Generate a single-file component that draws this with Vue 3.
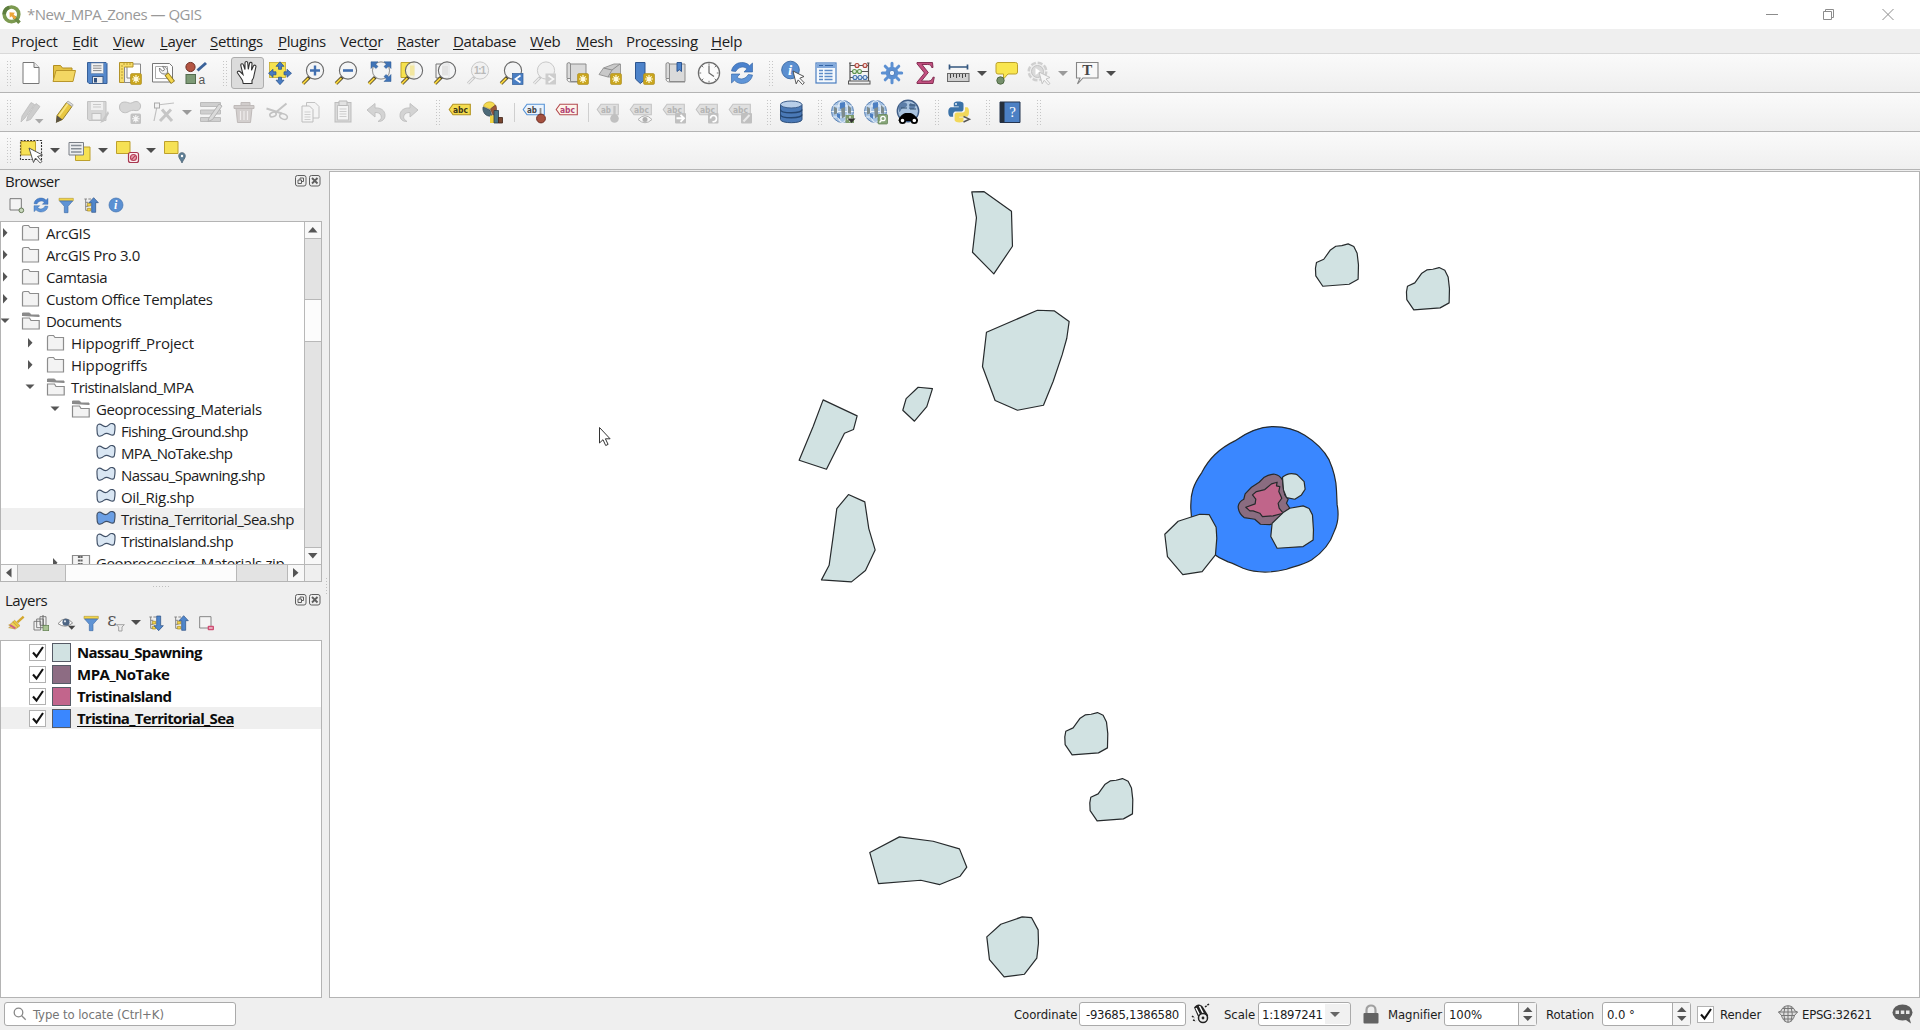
<script setup>
const menus = [
  { pre: 'Pro', key: 'j', post: 'ect', w: 61.5 },
  { pre: '', key: 'E', post: 'dit', w: 40.5 },
  { pre: '', key: 'V', post: 'iew', w: 47 },
  { pre: '', key: 'L', post: 'ayer', w: 50 },
  { pre: '', key: 'S', post: 'ettings', w: 68 },
  { pre: '', key: 'P', post: 'lugins', w: 62 },
  { pre: 'Vect', key: 'o', post: 'r', w: 57 },
  { pre: '', key: 'R', post: 'aster', w: 56 },
  { pre: '', key: 'D', post: 'atabase', w: 77 },
  { pre: '', key: 'W', post: 'eb', w: 46 },
  { pre: '', key: 'M', post: 'esh', w: 50 },
  { pre: 'Pro', key: 'c', post: 'essing', w: 85 },
  { pre: '', key: 'H', post: 'elp', w: 60 },
]

const lens = (inner = '', stroke = '#6a6a6a', handle = '#f4d13c') =>
  `<path d="M2 22.5 8.5 16" stroke="#4a4226" stroke-width="3.6"/><path d="M1.8 22.7 7.4 17.1" stroke="${handle}" stroke-width="2"/><circle cx="14" cy="9.5" r="8.6" fill="#f3f5f6" fill-opacity=".85" stroke="${stroke}" stroke-width="1.1"/>${inner}`
const fadedLens = (inner = '') =>
  `<path d="M2 22.5 8.5 16" stroke="#c3c3c3" stroke-width="3"/><path d="M2 22.5 7.4 17.1" stroke="#ededed" stroke-width="1.4"/><circle cx="14" cy="9.5" r="8.6" fill="#f1f1f1" stroke="#c9c9c9"/>${inner}`
const star = `<rect x="12.5" y="12.5" width="11" height="11" rx="1.5" fill="#c9a51d" stroke="#a98a1c" stroke-width=".6"/><path d="M18 14v8M14 18h8M15.3 15.3l5.4 5.4M20.7 15.3l-5.4 5.4" stroke="#fffbe0" stroke-width="1.2"/><circle cx="18" cy="18" r="1.8" fill="#fffbe0"/>`
const greyStar = `<rect x="12.5" y="13.5" width="10.5" height="10.5" rx="1.5" fill="#c2c2c2"/><path d="M17.8 15v7.6M14 18.8h7.6M15.2 16.2l5.2 5.2M20.4 16.2l-5.2 5.2" stroke="#f6f6f6" stroke-width="1.1"/>`
const tag = (fill, stroke, color, txt = 'abc') =>
  `<path d="M1.2 9.5 5 4.3h17.3v10.4H5z" fill="${fill}" stroke="${stroke}" stroke-width="1.1"/><text x="5" y="12.5" font-family="DejaVu Sans, sans-serif" font-size="8.4" font-weight="bold" fill="${color}" textLength="${txt.length * 5}" lengthAdjust="spacingAndGlyphs">${txt}</text>`
const greyTag = (txt = 'abc') => tag('#e0e0e0', '#c4c4c4', '#b4b4b4', txt)
const cycle = `<path d="M1.5 10C2.5 4 8 .8 13.500 1.600c2.600.4 4.700 1.500 6 3.100L22.500 2v9H14l3-3.200c-3.500-3-8.500-2-11.300 2.700z" fill="#4b82cd" stroke="#2d5f9f" stroke-width=".6"/><path d="M22.500 14C21.500 20 16 23.200 10.500 22.400c-2.600-.4-4.700-1.500-6-3.100L1.500 22v-9H10l-3 3.200c3.500 3 8.500 2 11.300-2.700z" fill="#5f95d8" stroke="#2d5f9f" stroke-width=".6"/>`
const globe = `<circle cx="12.500" cy="11.500" r="11" fill="#a6c3e3" stroke="#5b82b5" stroke-width="1"/><path d="M1.500 11.500h22M3 6h19M3 17h19" stroke="#ecf3fa" stroke-width="1.1"/><ellipse cx="12.500" cy="11.500" rx="5" ry="11" fill="none" stroke="#dfeaf6" stroke-width="1.1"/><path d="M4 6.500l3 2v5l-3 1zM18 5l3 3v6l-3-1zM11 7.500l4-2v11l-3 2z" fill="#7d8b8c"/><path d="M10 3l5-1v5l-5 2zM7 13l3 1v5l-3-2z" fill="#4c7fc2"/>`
const book = `<path d="M2 3c0-1.800 3.500-1.800 3.500 0v14.500H2zM5.500 3H21v17.500H5.500z" fill="#dadada" stroke="#8b8b8b"/><path d="M2 18c0 3 3.500 3 3.500 3H21" fill="none" stroke="#8b8b8b"/>`

const I = {
  new: `<path d="M4 1.500h11l5 5V22.500H4z" fill="#fff" stroke="#777"/><path d="M15 1.500v5h5" fill="#e8e8e8" stroke="#777"/>`,
  open: `<path d="M1.500 20.500V4.500h7l2 2.500H20v3" fill="#e5c345" stroke="#b38f20"/><path d="M1 20.500 4 9.500h19.500l-2.500 11z" fill="#f3d763" stroke="#b9962a"/>`,
  save: `<path d="M2.500 1.500h18.500l1 1v20H4l-1.500-1.500z" fill="#5588cb" stroke="#365f98"/><rect x="6" y="2" width="12.500" height="10.500" fill="#f2f2f2" stroke="#7188a8" stroke-width=".6"/><path d="M8 4.800h8.500M8 7.200h8.500M8 9.600h8.500" stroke="#888" stroke-width="1"/><rect x="7.500" y="15.500" width="10.500" height="7" fill="#e9e9e9" stroke="#3c5d8c"/><rect x="9" y="17" width="3" height="4.500" fill="#33527f"/>`,
  layoutNew: `<path d="M9 3h13.500v14H9z" fill="#fff" stroke="#888"/><path d="M1.500 1.500H15V6H6.500v15.500h-5z" fill="#f6dc68" stroke="#b39328"/><path d="M6.500 6v15.500H14" fill="none" stroke="#8a8a8a"/><path d="M3 5h2M3 8h2M3 11h2M3 14h2M3 17h2M6 2v2M9 2v2M12 2v2" stroke="#ad8f2f" stroke-width=".8"/>${star}`,
  layoutMgr: `<path d="M1.500 2.500h17l3 3v15.500h-20z" fill="#fdfdfd" stroke="#777"/><path d="M4.500 5.500h12v12h-12z" fill="#fff" stroke="#aaa"/><path d="M15.500 13l6.500 8.500" stroke="#8b741a" stroke-width="5"/><path d="M16 13.500l5.600 7.500" stroke="#f4d64e" stroke-width="3.200"/><path d="M8.500 7c-.5 3.500 1.500 6.500 6.200 6l2-1.800c0-4-2.500-6-5.200-5.800l2.200 3.200-2.200 1.500z" fill="#f3f3f3" stroke="#777"/>`,
  style: `<circle cx="6.500" cy="6" r="4.600" fill="#b45543" stroke="#713026"/><path d="M22 2 13.500 9.500" stroke="#3a6299" stroke-width="3"/><rect x="2" y="13.500" width="9.500" height="9" fill="#7d9a76" stroke="#536b4e"/><text x="14.500" y="22.500" font-family="Liberation Sans, sans-serif" font-size="12" fill="#555">a</text>`,
  hand: `<path d="M6.500 19.500C4.500 16 2.500 13.500 1.500 12c-.8-1.800 1.500-2.600 3-1L7 13.500 4.800 4.500c-.3-2 2.200-2.300 2.700-.5L9 8.500V1.800c.2-1.800 2.600-1.700 2.700 0l.6 6.500 1.200-6c.6-1.600 2.800-1 2.500.6l-.5 6.400 2-4.500c1-1.400 2.800-.5 2.400 1l-1.700 7.700c-.3 3-.8 4.500-2.200 6V22.500H7.200z" transform="translate(1 0)" fill="#fff" stroke="#333" stroke-width="1.100"/>`,
  panSel: `<rect x="1.500" y="1.500" width="16" height="15" fill="#f6e24e" stroke="#c4a92c" stroke-width=".8"/><g fill="#477cc4" stroke="#264f88" stroke-width=".7"><path d="M12 .8l4 4.500h-2.500v3h-3v-3H8z"/><path d="M12 23.700l4-4.500h-2.500v-3h-3v3H8z"/><path d="M.5 12.300 5 8.300v2.500h3v3H5v2.500z"/><path d="M23.500 12.300 19 8.300v2.500h-3v3h3v2.500z"/></g>`,
  zoomIn: lens(`<path d="M14 4.500v10M9 9.500h10" stroke="#416fb0" stroke-width="2.400"/>`),
  zoomOut: lens(`<path d="M9 9.500h10" stroke="#416fb0" stroke-width="2.600"/>`),
  zoomFull: lens(`<g fill="#3f74b8" stroke="#2b568f" stroke-width=".5"><path d="M4 .8h7L8.500 3 11 5.500 8.800 7.500 6.300 5 4 7.500zM24 .8h-7L19.500 3 17 5.500l2.200 2L21.700 5 24 7.500zM24 20.500h-7l2.500-2.500L17 15.500l2.200-2 2.500 2.500L24 13.500z"/></g>`, '#999'),
  zoomSel: `<path d="M1 1.500h13v15H1z" fill="#f6e24e" stroke="#bfa52c"/>` + lens(`<path d="M10 4.500h4.500v10H10z" fill="#f3e7a0"/>`),
  zoomLayer: `<path d="M3 3h13v14H3z" fill="#f3f3f3" stroke="#777"/>` + lens(`<path d="M9 4.500h6v10H9z" fill="#e2e2e2"/>`),
  zoom11: fadedLens(`<text x="8" y="13" font-family="Liberation Sans, sans-serif" font-weight="bold" font-size="10" fill="#b9b9b9" textLength="12">1:1</text>`),
  zoomLast: lens(`<rect x="13.500" y="12.500" width="10.500" height="11" fill="#4a7fc4" stroke="#2f5d99" stroke-width=".7"/><path d="M21.500 14.500 16.500 18l5 3.500" fill="none" stroke="#fff" stroke-width="1.700"/>`),
  zoomNext: fadedLens(`<rect x="13.500" y="12.500" width="10.500" height="11" fill="#cdcdcd"/><path d="M16.500 14.500 21.500 18l-5 3.500" fill="none" stroke="#f7f7f7" stroke-width="1.600"/>`),
  newMap: book + star,
  new3d: `<path d="M1 13.500 5.500 7 16 3h6.500V16H10z" fill="#c9c9c9" stroke="#999"/><path d="M5.500 7 14 9l8-6M14 9l-4 7" stroke="#8d8d8d" fill="none"/>` + star,
  newBm: `<path d="M4.500 1.500h9.500v17l-4.700 4L4.500 18z" fill="#4d83ca" stroke="#2c5590"/>` + star,
  bm: book + `<path d="M13 1.500h4.500v9l-2.200-1.800L13 10.500z" fill="#4d83ca" stroke="#2c5590"/>`,
  clock: `<circle cx="12" cy="12" r="10.600" fill="#fbfbfb" stroke="#6c6c6c" stroke-width="1.200"/><path d="M12 4.500V12l5 3.500" fill="none" stroke="#666" stroke-width="1.200"/><path d="M12 2.200v2M12 19.800v2M2.200 12h2M19.800 12h2M5 5l1.300 1.300M19 5l-1.300 1.300M5 19l1.300-1.300M19 19l-1.300-1.300" stroke="#777"/>`,
  refresh: cycle,
  identify: `<circle cx="9.500" cy="9" r="8.800" fill="#5b8fd0" stroke="#416fa9"/><text x="7" y="14.300" font-family="Liberation Serif, serif" font-style="italic" font-weight="bold" font-size="15" fill="#fff">i</text><path d="M12 10l11 5.500-4.200 1.700 4.500 4.700-1.800 1.600-4.300-4.600-2 4z" fill="#fff" stroke="#444" stroke-width=".9"/>`,
  table: `<rect x="2" y="2" width="20" height="20" fill="#f5f9fd" stroke="#4a7dc0" stroke-width="1.200"/><rect x="2.500" y="2.500" width="19" height="4.500" fill="#82a9dc"/><path d="M5 9.500h4M10.500 9.500h8M5 12.500h4M10.500 12.500h8M5 15.500h4M10.500 15.500h8M5 18.500h4M10.500 18.500h8" stroke="#5d8bc7" stroke-width="1.300"/><path d="M5 4.500h4M11 4.500h8" stroke="#3465a4" stroke-width="1.200"/>`,
  abacus: `<path d="M3 1.500v20M21.500 1.500v20M3 4.500h18.500M3 10.500h18.500M3 16.500h18.500M2 2h2.500M20 2h2.500" stroke="#555" stroke-width="1.200"/><rect x="1.500" y="20" width="21.500" height="3" fill="#ededed" stroke="#555"/><g fill="#f4dcda" stroke="#b04236" stroke-width="1.100"><circle cx="10" cy="4.500" r="2"/><circle cx="18" cy="4.500" r="2"/></g><g fill="#deeed8" stroke="#5f9450" stroke-width="1.100"><circle cx="7.500" cy="10.500" r="2"/><circle cx="12.500" cy="10.500" r="2"/></g><g fill="#d8e6f4" stroke="#4273b2" stroke-width="1.100"><circle cx="8" cy="16.500" r="2"/><circle cx="13" cy="16.500" r="2"/><circle cx="18" cy="16.500" r="2"/></g>`,
  gear: `<g stroke="#5c90d2" stroke-width="3" stroke-linecap="round"><path d="M12 2.300v19.400M2.300 12h19.400M5.200 5.200l13.600 13.600M18.800 5.200 5.200 18.800"/></g><circle cx="12" cy="12" r="6.300" fill="#5c90d2"/><circle cx="12" cy="12" r="2.700" fill="#eaf2fb" stroke="#3c6db0" stroke-width=".8"/>`,
  sigma: `<path d="M4 1.500h15.500l.5 5h-1.300c-.6-2.500-1.700-3-4-3H9l6.300 8L8.500 20h7c2.500 0 3.500-1.200 4.500-3.800h1.300l-1.300 6.300H4v-1.300L11.500 12 4 2.800z" fill="#c25080" stroke="#7c2549" stroke-width=".9"/>`,
  ruler: `<path d="M3.500 6h18M3.500 3.500v5M21.500 3.500v5" stroke="#34577f" stroke-width="1.700"/><rect x="1.500" y="12.500" width="21.500" height="8" fill="#cfcfcf" stroke="#686868"/><path d="M4.500 13v4M7.500 13v3M10.500 13v4M13.500 13v3M16.500 13v4M19.500 13v3" stroke="#444" stroke-width="1"/>`,
  tip: `<path d="M4 1.500h17.500q2 0 2 2v7.500q0 2-2 2H14L9.500 18V13H4q-2 0-2-2V3.500q0-2 2-2z" fill="#f9e64f" stroke="#bba12c"/><circle cx="6.500" cy="19.500" r="3.700" fill="#76906c" stroke="#4f6944"/>`,
  action: `<circle cx="10.500" cy="10.500" r="8.800" fill="#eee" stroke="#cfcfcf" stroke-width="2.400" stroke-dasharray="5 1.900"/><circle cx="10.500" cy="10.500" r="6" fill="#dadada" stroke="#c3c3c3"/><path d="M8.500 7v7l5-3.500z" fill="#fff"/><path d="M12 11l11 5.500-4 1.500 4 4.500-1.800 1.300-4-4.500-2 3.500z" fill="#f6f6f6" stroke="#c0c0c0" stroke-width=".9"/>`,
  text: `<path d="M1.500 1.500h21.500V17H8l-5.500 6L5 17H1.500z" fill="#f8f8f8" stroke="#858585" stroke-width="1.100"/><text x="12.300" y="14" text-anchor="middle" font-family="Liberation Serif, serif" font-weight="bold" font-size="15" fill="#474747">T</text>`,

  pencils: `<path d="M2 22l1-6L12 2.500l3.500 2L6 18zM7.500 21l1.500-5.500L17 3.500l4 3L11.500 19.500z" fill="#cdcdcd" stroke="#bdbdbd" stroke-width=".8"/><path d="M16 19h8.500l-4.200 4.500z" fill="#a9a9a9"/>`,
  pencil: `<path d="M5 15.500 14.500 2.500l5.500 4L10.500 19.500 4.500 22z" fill="#e8c742" stroke="#8f7622" stroke-width=".9"/><path d="M7 16 16 3.500" stroke="#f8e581" stroke-width="1.800"/><path d="M14.500 2.500 16 1l5.200 3.800L20 6.500z" fill="#ddd" stroke="#999" stroke-width=".7"/><path d="M5 15.500l5.500 4L3.800 23z" fill="#5a5344"/>`,
  saveG: `<path d="M2.500 1.500H21v19H4l-1.500-1.500z" fill="#d6d6d6" stroke="#c2c2c2"/><rect x="6" y="2" width="12" height="8" fill="#f0f0f0"/><path d="M8 4.500h8M8 7h8" stroke="#c9c9c9"/><rect x="7" y="13.500" width="9" height="6.500" fill="#efefef" stroke="#c2c2c2"/><path d="M23 11l-6 9-2 3 4-1.500 5-8z" fill="#c6c6c6"/>`,
  polyG: `<path d="M1.500 7C1.500 1 8 1.500 11 3c2.500 1 4-1.500 7-1.500s5 2.500 4.500 5.500-3 4-5.500 3.500-4.500 0-7 1.500-8.500 1-8.500-5z" fill="#d6d6d6" stroke="#c0c0c0"/>` + greyStar,
  vertexG: `<path d="M3 21 6 6.500M6 5l17-2" stroke="#c0c0c0" stroke-width="1.200"/><rect x="3.500" y="3" width="5" height="5" fill="#f3f3f3" stroke="#aaa"/><path d="M9 21 20 9.500M11 9.500l10 11.500" stroke="#c6c6c6" stroke-width="3"/>`,
  attrG: `<path d="M1.500 2.500h20v4h-20zM1.500 10h20v4h-20zM1.500 17.500h20v4h-20z" fill="#cfcfcf" stroke="#bcbcbc"/><path d="M10 18 20 4l3 2-9.500 13.500-4.500 2z" fill="#dadada" stroke="#b3b3b3"/>`,
  trashG: `<path d="M4 8.500h16l-1.500 14h-13z" fill="#d3cfce" stroke="#bfbab9"/><path d="M2 5.500h20v3H2zM9 5V2.500h9V5" fill="#d1cdcc" stroke="#bfbab9"/><path d="M8.500 11v9M12 11v9M15.500 11v9" stroke="#efecec" stroke-width="1.200"/>`,
  cutG: `<path d="M1.500 8.500 17 13.500M21.500 3.500 10 13" stroke="#c4c4c4" stroke-width="2"/><ellipse cx="18.500" cy="16.500" rx="4" ry="2.600" fill="none" stroke="#c2c2c2" stroke-width="1.500" transform="rotate(25 18.500 16.500)"/><ellipse cx="8" cy="14.500" rx="3.300" ry="2.200" fill="none" stroke="#c2c2c2" stroke-width="1.500" transform="rotate(-20 8 14.500)"/>`,
  copyG: `<path d="M8.500 2.500h8.500l4 4V18H8.500z" fill="#f4f4f4" stroke="#c2c2c2"/><path d="M4 6h7.500l3.500 3.500V22H4z" fill="#f4f4f4" stroke="#bdbdbd"/><path d="M6.500 12h6M6.500 14.500h6M6.500 17h6M6.500 19.500h6" stroke="#cfcfcf"/>`,
  pasteG: `<rect x="4" y="2.500" width="16" height="19.500" fill="#d9d9d9" stroke="#bdbdbd"/><rect x="6.500" y="5.500" width="11" height="14.500" fill="#f4f4f4" stroke="#c4c4c4"/><path d="M8 1h8v4.500H8z" fill="#e2e2e2" stroke="#b9b9b9"/><path d="M8.500 9h7M8.500 11.500h7M8.500 14h7M8.500 16.500h7" stroke="#cdcdcd"/>`,
  undoG: `<path d="M3 10 11 3.500V8c6-.5 10 2.500 10 7.500 0 4-3 6-7 6 3-2 4-3.500 3-6s-3-3-6-3V17z" fill="#d3d3d3" stroke="#c2c2c2"/>`,
  redoG: `<path d="M21 10 13 3.500V8C7 7.500 3 10.500 3 15.500c0 4 3 6 7 6-3-2-4-3.500-3-6s3-3 6-3V17z" fill="#d3d3d3" stroke="#c2c2c2"/>`,
  abcY: tag('#f5dc4f', '#b39422', '#3c3618'),
  diagram: `<path d="M2.500 6.500C3 1 13 0 14 5.500L9 9z" fill="#f3d94f" stroke="#b3952b" stroke-width=".6"/><path d="M2 7l7 3 2 6C5 17.500 1 12 2 7z" fill="#4d6a79" stroke="#2b3d47" stroke-width=".6"/><path d="M9.500 9 14.500 5c2 3 1 8-2.500 10.500z" fill="#9a5738" stroke="#5f3120" stroke-width=".6"/><path d="M9 15.500h4V23H9z" fill="#f0d23e"/><path d="M13 10.500h4.500V23H13z" fill="#4b7583" stroke="#2b3d47" stroke-width=".8"/><path d="M17.500 17.500h4V23h-4z" fill="#7a4630" stroke="#3d2216" stroke-width=".8"/>`,
  abRed: tag('#eaf3fd', '#5692d6', '#444', 'ab') + `<path d="M18.500 8v8" stroke="#8f8f8f" stroke-width="1.800"/><circle cx="19" cy="18.500" r="4.400" fill="#a5503f" stroke="#6f2c22"/>`,
  abcR: tag('#fdf4e9', '#b44a50', '#b24173'),
  lab1: greyTag('ab') + `<path d="M18.500 6v10" stroke="#c3c3c3" stroke-width="2.400"/><circle cx="18.500" cy="18.500" r="4.300" fill="#c0c0c0"/>`,
  lab2: greyTag() + `<path d="M9 19.500q7-7.500 14 0-7 6.500-14 0z" fill="#f6f6f6" stroke="#b3b3b3"/><circle cx="16" cy="19.500" r="2.500" fill="#b0b0b0"/>`,
  lab3: greyTag() + `<rect x="13" y="13" width="11" height="10.500" rx="1" fill="#c0c0c0"/><path d="M14.500 18.300h7M18.500 14.800l3.500 3.500-3.500 3.500" stroke="#fff" stroke-width="1.900" fill="none"/>`,
  lab4: greyTag() + `<rect x="13" y="13" width="10.500" height="10.500" rx="1" fill="#c0c0c0"/><path d="M15.500 18.500c0-4 6-4 6 0s-3 3-4 3.500" stroke="#fff" stroke-width="1.600" fill="none"/>`,
  lab5: greyTag() + `<rect x="13" y="13" width="11" height="10.500" rx="1" fill="#c0c0c0"/><path d="M15.500 21.500l6-6.500" stroke="#e9e9e9" stroke-width="2"/>`,
  db: `<path d="M1.500 4.500v15c0 4.300 21.500 4.300 21.500 0v-15" fill="#4a79b6" stroke="#2e4f7a"/><path d="M1.500 9.500c0 4.300 21.500 4.300 21.500 0M1.500 14.500c0 4.300 21.500 4.300 21.500 0" fill="none" stroke="#24456f" stroke-width="1.300"/><ellipse cx="12.200" cy="4.500" rx="10.700" ry="3.500" fill="#b9cfe9" stroke="#3d5e8b"/>`,
  globe1: globe + `<rect x="15.500" y="15" width="8.500" height="8" fill="#7c9a6a"/><path d="M17 19h6M20 16v6" stroke="#fff" stroke-width="1.200"/><path d="M17.500 18.500h8l-4 4.500z" fill="#333"/>`,
  globe2: globe + `<rect x="15" y="14.500" width="9.500" height="9.500" rx="1" fill="#86a578" stroke="#5c7c4e" stroke-width=".7"/><circle cx="20" cy="18.500" r="2.200" fill="none" stroke="#fff" stroke-width="1.300"/><path d="M18.300 20.500 16.500 22.500" stroke="#fff" stroke-width="1.300"/>`,
  globe3: `<circle cx="12" cy="11" r="10.700" fill="#a9c3de" stroke="#3f5d86" stroke-width="1.400"/><path d="M3 5c3-4 7-3 8-1s-2 4-4 4-2 4-4 4zM14 3l6 2-2 4h-5z" fill="#5c7ea8"/><path d="M13 5h6M5 8h6M14 9h6" stroke="#33506f"/><path d="M2.500 21c0-4 5-8 7-8h5c2 0 7 4 7.500 8z" fill="#000"/><circle cx="6.500" cy="20.500" r="2.700" fill="#fff" stroke="#000" stroke-width="1.800"/><circle cx="18.300" cy="20.500" r="2.700" fill="#fff" stroke="#000" stroke-width="1.800"/>`,
  python: `<path d="M11.500 1.500c-5 0-4.700 2.200-4.700 2.200V6.500h5v.8H4.500S1.300 7 1.300 12s2.800 4.800 2.800 4.800h2v-2.500s-.1-2.800 2.800-2.800h5s2.600 0 2.600-2.600V4.200s.4-2.700-5-2.700z" fill="#3b72a8"/><circle cx="9" cy="4" r=".9" fill="#fff"/><path d="M12.500 22.500c5 0 4.700-2.200 4.700-2.200v-2.800h-5v-.8h7.300s2.500.3 2.500-4.700-2-4.800-2-4.800h-2v2.500s.1 2.800-2.800 2.800h-5s-2.600 0-2.600 2.600v4.700s-.4 2.700 4.900 2.700z" fill="#f2d85a"/><path d="M16.500 16.500l6 2.700-6 2.800" fill="#f8f8f8" stroke="#555" stroke-width="1.400"/>`,
  help: `<path d="M2 2h20v20.500H2z" fill="#4c80c4" stroke="#24344f"/><path d="M2 2h4.500v20.500H2z" fill="#252f3c"/><text x="14.500" y="17" text-anchor="middle" font-family="Liberation Serif, serif" font-size="15" fill="#fff">?</text>`,

  select: `<rect x="1.500" y="1.500" width="21" height="19" fill="none" stroke="#333" stroke-width="1.100" stroke-dasharray="2 1.200"/><path d="M2 2.500h14.500v13.500H2z" fill="#f6e154" stroke="#bda02c"/><path d="M10 9l13.500 7-5 1.500 4.500 5-1.800 1.500-4.700-5-2 4.500z" fill="#fff" stroke="#555"/>`,
  form: `<path d="M8.500 8h14.500v13.500H8.500z" fill="#f6e154" stroke="#bda02c"/><path d="M2 3.500h14.500v12.500H2z" fill="#eceef0" stroke="#7a7f86"/><path d="M4 6.500h10.500M4 9.800h10.500M4 13h10.500" stroke="#868d95" stroke-width="1.400"/>`,
  desel: `<path d="M1.500 2.500h13.500v12H1.500z" fill="#f6e154" stroke="#bda02c"/><rect x="13.500" y="13.500" width="10" height="10" rx="2" fill="#fbeef0" stroke="#a83850" stroke-width="1.200"/><circle cx="18.500" cy="18.500" r="3" fill="#e9a3b0" stroke="#b8405a" stroke-width="1.200"/><path d="M16.500 20.700l4-4.400" stroke="#b8405a" stroke-width="1.200"/>`,
  selLoc: `<path d="M1.500 2.500h13.500v12H1.500z" fill="#f6e154" stroke="#bda02c"/><path d="M19 24c-1-3-3.300-4.500-3.300-7 0-4.500 6.600-4.500 6.600 0 0 2.500-2.300 4-3.300 7z" fill="#5f7f96" stroke="#42596a" stroke-width=".7"/><circle cx="19" cy="17" r="1.200" fill="#fff"/>`,

  addLayer: `<path d="M3 2.500h17v17H3z" fill="#f4f4f4" stroke="#666" stroke-width="1.300"/><circle cx="20" cy="20" r="3.500" fill="#c9d8bd" stroke="#667a58" stroke-width="1.500"/>`,
  funnel: `<path d="M1.500 2h21.500v3.500h-21.500z" fill="#f2d648" stroke="#a98c22" stroke-width=".8"/><path d="M2.500 6H22l-7 8v9.500H9.500V14z" fill="#5f93d4" stroke="#3f6da8"/>`,
  collapse: `<path d="M2 3h4M4 3v17M4 8h4M4 14h4M4 20h4M8 3h4" stroke="#808080" stroke-width="1.400"/><path d="M6.500 9.500h5v4h-5zM6.500 17h5v4h-5z" fill="#f1d349" stroke="#a68a25"/><path d="M16 1l7 7.500h-4V23h-6V8.500H9z" fill="#4f86cb" stroke="#274c80"/>`,
  expand: `<path d="M2 3h4M4 3v17M4 8h4M4 14h4M4 20h4M8 3h4" stroke="#808080" stroke-width="1.400"/><path d="M6.500 9.500h5v4h-5zM6.500 17h5v4h-5z" fill="#f1d349" stroke="#a68a25"/><path d="M16 23.500 9 16h4V1.500h6V16h4z" fill="#4f86cb" stroke="#274c80"/>`,
  info: `<circle cx="12" cy="12" r="10.500" fill="#5b90d2" stroke="#3e6fae"/><text x="9" y="18" font-family="Liberation Serif, serif" font-style="italic" font-weight="bold" font-size="18" fill="#fff">i</text>`,
  brush: `<path d="M23.500 2.500 14 11" stroke="#d4a72d" stroke-width="3.600"/><path d="M10 8l8 8-3 2.500-8-8z" fill="#ecc63c" stroke="#a98a2c" stroke-width=".8"/><path d="M7 10.500l8 8L11 21 1 19l3-2-3-2 3-1.500z" fill="#f0d25a" stroke="#b28c2f" stroke-width=".8"/><path d="M3 15l8 5" stroke="#cb5f86" stroke-width="3"/>`,
  group: `<path d="M1.500 9.500h10v13h-10zM5.500 6h10v13h-10zM10.500 2.500h9v13h-9z" fill="#f2f2f2" stroke="#6e6e6e" stroke-width="1.300"/><path d="M15 0v16" stroke="#666" stroke-width="1.500"/><rect x="15" y="15.500" width="8.500" height="8" fill="#a9c394" stroke="#5c7b4b"/>`,
  eye: `<path d="M0 13Q11-1 22 12 11 21 0 13z" fill="#fbfbfb" stroke="#8c8c8c" stroke-width="1.500"/><circle cx="12" cy="11" r="5.300" fill="#4d6583"/><circle cx="10.500" cy="9.500" r="1.700" fill="#dfe6ee"/><path d="M15 16h11l-5.500 6z" fill="#444"/>`,
  eps: `<text x="-1" y="16" font-family="DejaVu Serif, serif" font-size="27" fill="#555">ε</text><path d="M12.500 14.500h12l-3.500 3.500v6h-5v-6z" fill="#ececec" stroke="#909090" stroke-width="1.200"/>`,
  remove: `<path d="M2.500 2.500h17v17h-17z" fill="#f4f4f4" stroke="#777" stroke-width="1.300"/><rect x="14.500" y="16" width="9.500" height="7" rx="1.500" fill="#cf4f74"/><path d="M16.500 19.500h5.500" stroke="#fff" stroke-width="1.500"/>`,
}

const rows = [
  ['|', 'new', 'open', 'save', 'layoutNew', 'layoutMgr', 'style', '|', 'hand', 'panSel', 'zoomIn', 'zoomOut', 'zoomFull', 'zoomSel', 'zoomLayer', 'zoom11', 'zoomLast', 'zoomNext', 'newMap', 'new3d', 'newBm', 'bm', 'clock', 'refresh', '|', 'identify', 'table', 'abacus', 'gear', 'sigma', 'ruler', 'v', 'tip', 'action', 'w', 'text', 'v'],
  ['|', 'pencils', 'pencil', 'saveG', 'polyG', 'vertexG', 'x', 'attrG', 'trashG', 'cutG', 'copyG', 'pasteG', 'undoG', 'redoG', '|', 'abcY', 'diagram', '/', 'abRed', 'abcR', '/', 'lab1', 'lab2', 'lab3', 'lab4', 'lab5', '|', 'db', '|', 'globe1', 'globe2', 'globe3', '|', 'python', '|', 'help', '|'],
  ['|', 'select', 'v', 'form', 'v', 'desel', 'v', 'selLoc'],
]
const kinds = { '|': 'grip', '/': 'sep', v: 'caret', w: 'caret faded', x: 'caret faded' }

const F = 'M1.500 3.500q0-2 2-2h4l1.500 2h8.500v12.500h-16z'
// s: letter spacing of the label, in pixels
const tree = [
  { d: 0, a: 'r', i: 'folder', t: 'ArcGIS', s: -0.3 },
  { d: 0, a: 'r', i: 'folder', t: 'ArcGIS Pro 3.0', s: -0.38 },
  { d: 0, a: 'r', i: 'folder', t: 'Camtasia', s: -0.42 },
  { d: 0, a: 'r', i: 'folder', t: 'Custom Office Templates', s: -0.4 },
  { d: 0, a: 'd', i: 'open', t: 'Documents', s: -0.54 },
  { d: 1, a: 'r', i: 'folder', t: 'Hippogriff_Project', s: -0.17 },
  { d: 1, a: 'r', i: 'folder', t: 'Hippogriffs', s: -0.12 },
  { d: 1, a: 'd', i: 'open', t: 'TristinaIsland_MPA', s: -0.57 },
  { d: 2, a: 'd', i: 'open', t: 'Geoprocessing_Materials', s: -0.41 },
  { d: 3, i: 'shp', t: 'Fishing_Ground.shp', s: -0.66 },
  { d: 3, i: 'shp', t: 'MPA_NoTake.shp', s: -0.72 },
  { d: 3, i: 'shp', t: 'Nassau_Spawning.shp', s: -0.6 },
  { d: 3, i: 'shp', t: 'Oil_Rig.shp', s: -0.3 },
  { d: 3, i: 'shp', t: 'Tristina_Territorial_Sea.shp', s: -0.57, sel: true },
  { d: 3, i: 'shp', t: 'TristinaIsland.shp', s: -0.63 },
  { d: 2, a: 'r', i: 'zip', t: 'Geoprocessing_Materials.zip', s: -0.4 },
]

const layers = [
  { t: 'Nassau_Spawning', c: '#d1e2e2', s: -0.58 },
  { t: 'MPA_NoTake', c: '#8d6c83', s: -0.5 },
  { t: 'TristinaIsland', c: '#c2658c', s: -0.61 },
  { t: 'Tristina_Territorial_Sea', c: '#3a87ff', s: -0.66, sel: true },
]

const browserTools = ['addLayer', 'refresh', 'funnel', 'collapse', 'info']
const blob = '3,56 25,46 45,18 61,7 79,5 98,0 115,8 125,28 129,63 128,106 101,121 22,127 1,96 0,73'
</script>

<template>
  <div class="win">
    <header class="title">
      <svg class="logo" width="20" height="20" viewBox="0 0 20 20">
        <circle cx="9.500" cy="9.300" r="7.300" fill="#fff" stroke="#7c9a50" stroke-width="3.600" />
        <path d="M2.200 9.300a7.300 7.300 0 0 1 5-6.900" fill="none" stroke="#5d7d3f" stroke-width="3.600" />
        <path d="M12 12l5.500 5.700" stroke="#6b8a45" stroke-width="3.600" />
        <path d="M7.500 7.200l5.500.5-1.500 1.500 3 3.200-2 2-3.200-3.200-1.500 1.600z" fill="#eda63a" />
      </svg>
      <span class="caption">*New_MPA_Zones — QGIS</span>
      <svg class="controls" width="140" height="20" viewBox="0 0 140 20" fill="none" stroke="#8c8c8c">
        <path d="M5 9.500h12" />
        <path d="M62.500 6.500h8v8h-8zM64.500 6V4.500h8v8H71" />
        <path d="M121.500 4l11 11M132.500 4l-11 11" />
      </svg>
    </header>

    <nav class="menu">
      <span v-for="m in menus" :key="m.pre + m.key + m.post" :style="{ width: m.w + 'px' }">{{ m.pre }}<u>{{ m.key }}</u>{{ m.post }}</span>
    </nav>

    <div v-for="(row, r) in rows" :key="r" class="bar">
      <template v-for="(n, k) in row" :key="k">
        <span v-if="kinds[n]" :class="kinds[n]"></span>
        <span v-else class="tool" :class="{ active: n === 'hand' }"><svg width="24" height="24" viewBox="0 0 24 24" fill="none" v-html="I[n]"></svg></span>
      </template>
    </div>

    <main>
      <aside>
        <section class="browser">
          <div class="dockTitle">
            <span>Browser</span>
            <svg width="26" height="12" viewBox="0 0 26 12" fill="none" stroke="#5e5e5e"><rect x=".5" y=".5" width="10.500" height="10.500" rx="2" /><path d="M3 5h3.500v3.500H3zM5 5V3h3.500v3.500h-2" /><rect x="14.500" y=".5" width="10.500" height="10.500" rx="2" /><path d="M17 3l5.500 5.500M22.500 3 17 8.500" stroke-width="1.800" /></svg>
          </div>
          <div class="dockTools">
            <svg v-for="n in browserTools" :key="n" width="16" height="16" viewBox="0 0 24 24" fill="none" v-html="I[n]"></svg>
          </div>
          <div class="treeFrame">
            <div class="treeTop">
              <div class="tree">
                <div v-for="t in tree" :key="t.t" class="node" :class="['d' + t.d, { sel: t.sel }]">
                  <svg class="arrow" width="10" height="10" viewBox="0 0 10 10" fill="#555">
                    <path v-if="t.a === 'r'" d="M3 0v9.500L7.500 4.800z" />
                    <path v-if="t.a === 'd'" d="M.5 2.500h9L5 7z" />
                  </svg>
                  <svg v-if="t.i === 'folder'" class="ic" width="20" height="18" viewBox="0 0 20 18"><path :d="F" fill="#f3f3f3" stroke="#8d8d8d" stroke-width="1.200" /></svg>
                  <svg v-else-if="t.i === 'open'" class="ic" width="20" height="18" viewBox="0 0 20 18"><path d="M1.500 4V1h7l1.500 2h8v2" fill="#8a8a8a" stroke="#8a8a8a" /><path d="M1.500 6h7l1.500 2.500h8.200V17H1.500z" fill="#f3f3f3" stroke="#8a8a8a" stroke-width="1.200" /></svg>
                  <svg v-else-if="t.i === 'zip'" class="ic" width="20" height="18" viewBox="0 0 20 18"><path d="M1.500 1.500h17V17h-17z" fill="#f3f3f3" stroke="#8a8a8a" stroke-width="1.200" /><path d="M8 2v15M10.500 2v15" stroke="#666" stroke-width="2.200" stroke-dasharray="2 1.500" /></svg>
                  <svg v-else class="ic" width="21" height="18" viewBox="0 0 21 18"><path d="M1 5C1 1.500 4 1 6.500 3s5 1.500 7-.5 6.500-2 6.500 2-.5 5.500-.8 7.500-2.700 1.500-5 .3-4-1.300-6 .2-5 3-6.200 1S1.200 9.500 1 5z" :fill="t.sel ? '#6b9fe4' : '#d9e6f3'" stroke="#3f4f66" stroke-width="1.200" /></svg>
                  <span :style="{ letterSpacing: t.s + 'px' }">{{ t.t }}</span>
                </div>
              </div>
              <div class="vscroll">
                <i class="btn"><svg width="10" height="6"><path d="M0 5.500h9.500L4.800 0z" fill="#555" /></svg></i>
                <i class="g1"></i><i class="thumb"></i><i class="g2"></i>
                <i class="btn"><svg width="10" height="6"><path d="M0 0h9.500L4.800 5.500z" fill="#555" /></svg></i>
              </div>
            </div>
            <div class="hscroll">
              <i class="btn"><svg width="6" height="10"><path d="M5.500 0v9.500L0 4.800z" fill="#555" /></svg></i>
              <i class="g1"></i><i class="thumb"></i><i class="g2"></i>
              <i class="btn"><svg width="6" height="10"><path d="M0 0v9.500L5.500 4.800z" fill="#555" /></svg></i>
              <i class="corner"></i>
            </div>
          </div>
        </section>
        <div class="split"></div>
        <section class="layersDock">
          <div class="dockTitle">
            <span>Layers</span>
            <svg width="26" height="12" viewBox="0 0 26 12" fill="none" stroke="#5e5e5e"><rect x=".5" y=".5" width="10.500" height="10.500" rx="2" /><path d="M3 5h3.500v3.500H3zM5 5V3h3.500v3.500h-2" /><rect x="14.500" y=".5" width="10.500" height="10.500" rx="2" /><path d="M17 3l5.500 5.500M22.500 3 17 8.500" stroke-width="1.800" /></svg>
          </div>
          <div class="dockTools">
            <svg v-for="n in ['brush', 'group', 'eye', 'funnel', 'eps']" :key="n" width="16" height="16" viewBox="0 0 24 24" fill="none" v-html="I[n]"></svg>
            <span class="caret small"></span>
            <svg v-for="n in ['expand', 'collapse', 'remove']" :key="n" width="16" height="16" viewBox="0 0 24 24" fill="none" v-html="I[n]"></svg>
          </div>
          <div class="layerList">
            <div v-for="l in layers" :key="l.t" class="layer" :class="{ sel: l.sel }">
              <span class="check"><svg width="12" height="12" viewBox="0 0 12 12"><path d="M1 6.500l3.500 4L11 1" fill="none" stroke="#111" stroke-width="2.100" /></svg></span>
              <span class="swatch" :style="{ background: l.c }"></span>
              <span class="name" :style="{ letterSpacing: l.s + 'px' }">{{ l.t }}</span>
            </div>
          </div>
        </section>
      </aside>
      <div class="vsplit"></div>
      <div class="map">
        <svg width="1589" height="825" viewBox="330 172 1589 825">
          <g class="feat" transform="translate(779.800 169.900) scale(.33333)">
            <path d="M576 66 612 65 695 124 698 229 642 312 578 247 590 143z" />
            <path d="M620 487 773 421 824 423 868 455 861 505 847 555 820 635 791 706 713 721 646 692 608 590z" />
            <path d="M415 652 458 656 441 710 404 754 369 721 379 686z" />
            <path d="M130 690 232 738 221 779 194 790 140 898 58 871 100 770z" />
            <path d="M206 974 255 996 267 1076 286 1140 257 1202 215 1236 125 1230 148 1186 160 1100 171 1016z" />
          </g>
          <g class="feat" transform="translate(1139.800 229.900) scale(.33333)">
            <polygon :points="blob" transform="translate(527 42)" />
            <polygon :points="blob" transform="translate(800 113)" />
            <path fill="#3a87ff" d="M400 590C440 590 470 600 495 616C530 638 555 665 568 690C582 722 589 750 590 780L592 825C597 850 595 880 583 905C570 945 545 970 515 990C490 1005 455 1012 440 1018C400 1028 350 1030 310 1015C290 1006 275 998 265 996C225 980 200 960 180 930C160 900 152 870 153 825C153 790 160 765 186 728C205 690 240 655 285 633C320 608 355 590 400 590z" />
            <path fill="#8a6c80" d="M295 830Q297 815 312 808L316 792 335 772 358 757 372 743Q390 732 405 733 420 736 428 750L431 775 435 795 445 808 440 820 450 835 430 850 405 880 390 884 362 883 345 868 313 863Q296 850 295 830z" />
            <path fill="#c0658a" d="M318 832 346 822 348 808 338 795 350 785 375 779 395 762 412 757 410 768 420 770 417 785 426 805 415 820 418 835 430 850 400 858 368 860 360 850 340 843 330 843z" />
            <path d="M428 742Q440 731 455 731 470 731 475 737L493 755 496 778 485 795 465 808 440 803 431 780z" />
            <path d="M397 880 430 848 450 835 490 828 508 836 518 855 521 900 520 930 490 950 412 955 393 920z" />
            <path d="M75 913 115 874 180 853 208 854 229 892 231 925 227 975 187 1025 129 1034 83 980z" />
          </g>
          <g class="feat" transform="translate(849.800 689.900) scale(.33333)">
            <polygon :points="blob" transform="translate(645 68)" />
            <polygon :points="blob" transform="translate(720 266)" />
            <path d="M60 488 149 441 250 454 329 477 351 532 331 559 270 584 213 571 86 581z" />
            <path d="M411 741 453 703 517 681 545 683 565 720 566 760 561 805 524 853 463 861 419 809z" />
          </g>
          <path d="M599.500 427.500v15.500l3.500-3.300 2.700 5.800 2.400-1.100-2.700-5.600h4.700z" fill="#fff" stroke="#333" />
        </svg>
      </div>
    </main>

    <footer>
      <div class="field locate">
        <svg width="14" height="14" viewBox="0 0 14 14" fill="none" stroke="#888" stroke-width="1.300"><circle cx="5.500" cy="5.500" r="4.300" /><path d="M8.700 8.700l4 4" /></svg>
        <span>Type to locate (Ctrl+K)</span>
      </div>
      <span class="lb coord">Coordinate</span>
      <div class="field f1"><span>-93685,1386580</span></div>
      <svg class="s1" width="20" height="22" viewBox="0 0 20 22"><path d="M3 4.500C6 0 10 1 12 4l5 8c1 5-5 8-8.500 5z" fill="#222" /><path d="M5 5l4 8M8.500 3l4 8" stroke="#fff" stroke-width="1.500" /><circle cx="12" cy="15" r="4.500" fill="#eee" stroke="#222" stroke-width="1.500" /><circle cx="12" cy="15" r="1.400" fill="#222" /><path d="M1 13l2.500 2M14 4l4-3M2 17l3 1" stroke="#222" stroke-width="1.500" stroke-dasharray="2 1" /></svg>
      <span class="lb scale">Scale</span>
      <div class="field f2"><span>1:1897241</span><b></b></div>
      <svg class="s2" width="16" height="20" viewBox="0 0 16 20"><path d="M3.500 10V6c0-6 9-6 9 0v4" fill="none" stroke="#a0a0a0" stroke-width="2.200" /><rect x=".5" y="9" width="15" height="10.500" rx="1" fill="#636363" /></svg>
      <span class="lb mag">Magnifier</span>
      <div class="field f3"><span>100%</span><em><svg width="10" height="14"><path d="M0 5h9.500L4.800 0zM0 9h9.500L4.800 14z" fill="#555" /></svg></em></div>
      <span class="lb rot">Rotation</span>
      <div class="field f4"><span>0.0 °</span><em><svg width="10" height="14"><path d="M0 5h9.500L4.800 0zM0 9h9.500L4.800 14z" fill="#555" /></svg></em></div>
      <span class="check"><svg width="12" height="12" viewBox="0 0 12 12"><path d="M1 6.500l3.500 4L11 1" fill="none" stroke="#111" stroke-width="2.100" /></svg></span>
      <span class="lb rend">Render</span>
      <svg class="s3" width="20" height="18" viewBox="0 0 20 18" fill="none" stroke="#777"><path d="M3 6C5-1 15-1 17 6l2.500 1-3 3.500C14 19.500 6 19.500 3.500 10.500L.5 7z" fill="#dedede" /><path d="M.5 7h19M3 10.500h14M5 14h10M4.500 3.500h11M10 .8v16.500" /><path d="M7 1.500Q4.500 9 7 16.500M13 1.500q2.500 7.500 0 15" /></svg>
      <span class="lb epsg">EPSG:32621</span>
      <svg class="s4" width="22" height="20" viewBox="0 0 22 20"><ellipse cx="10.500" cy="8.500" rx="10" ry="8" fill="#5c5c5c" /><path d="M11 14l8 5.500-2-7z" fill="#5c5c5c" /><path d="M3.500 6.500h3.500v3.500H3.500zM8.800 6.500h3.500v3.500H8.800zM14 6.500h3.500v3.500H14z" fill="#e6e6e6" /></svg>
    </footer>
  </div>
</template>

<style>
html, body { margin: 0; background: #efefef; overflow: hidden; }
</style>

<style scoped>
* { box-sizing: border-box; }
.win { width: 1920px; height: 1030px; display: flex; flex-direction: column; background: #efefef; font-family: "Open Sans", "Noto Sans", sans-serif; font-size: 15px; color: #1c1c1c; overflow: hidden; white-space: nowrap; }
svg { display: block; flex: none; overflow: visible; }
.title { height: 29px; flex: none; background: #fff; display: flex; align-items: center; padding: 0 19px 0 2px; }
.caption { margin-left: 5px; flex: 1; color: #999; font-size: 15px; letter-spacing: -.5px; padding-bottom: 2px; }
.menu { height: 25px; flex: none; display: flex; align-items: center; padding-left: 11px; border-bottom: 1px solid #d9d9d9; letter-spacing: -.35px; line-height: 24px; }
.menu span { flex: none; }
.menu u { text-decoration-thickness: 1px; text-underline-offset: 2px; }
.bar { height: 39px; flex: none; display: flex; align-items: center; border-bottom: 1px solid #b4b4b4; background: linear-gradient(#fafafa, #efefef); }
.bar:nth-of-type(3) { height: 38px; }
.tool { width: 33px; height: 32px; flex: none; display: flex; align-items: center; justify-content: center; }
.tool.active { background: #dcdcdc; border: 1px solid #adadad; border-radius: 3px; }
.grip { width: 18px; height: 25px; flex: none; display: flex; gap: 1px; padding-left: 10px; }
.grip::before, .grip::after { content: ""; width: 1px; background: repeating-linear-gradient(#c6c6c6 0 1px, transparent 1px 3px); }
.grip::after { margin-left: 1px; }
.grip:first-child { margin-left: -3.500px; }
.sep { width: 8px; height: 19px; flex: none; background: linear-gradient(#cfcfcf, #cfcfcf) 4px 0 / 1px 100% no-repeat; }
.caret { width: 15px; flex: none; display: flex; justify-content: center; }
.caret::before { content: ""; border: 5px solid transparent; border-top-color: #4d4d4d; border-bottom: 0; }
.caret.faded::before { border-top-color: #9a9a9a; }
main { flex: 1; display: flex; min-height: 0; }
aside { width: 322px; flex: none; display: flex; flex-direction: column; }
.dockTitle { display: flex; align-items: center; justify-content: space-between; height: 22px; padding: 0 1px 0 5px; letter-spacing: -.55px; }
.browser { height: 412px; flex: none; display: flex; flex-direction: column; }
.dockTools { height: 29px; display: flex; align-items: center; gap: 9px; padding: 0 0 4px 8px; }
.caret.small { width: 11px; margin: 0 -2px 0 -3px; }
.treeFrame { border: 1px solid #b4b4b4; height: 361px; flex: none; display: flex; flex-direction: column; background: #fff; }
.treeTop { flex: 1; display: flex; min-height: 0; }
.tree { flex: 1; overflow: hidden; }
.node { height: 22px; display: flex; align-items: center; }
.node .arrow { margin-right: 11px; margin-left: -1.500px; }
.node .ic { width: 20px; margin-right: 5.500px; }
.node.d1 { padding-left: 25px; }
.node.d2 { padding-left: 50px; }
.node.d3 { padding-left: 75px; }
.sel { background: #efefef; }
i { display: block; }
.vscroll { width: 17px; border-left: 1px solid #b8b8b8; background: #e3e3e3; display: flex; flex-direction: column; }
.btn { display: flex; align-items: center; justify-content: center; background: #f8f8f8; flex: none; }
.vscroll .btn { height: 17px; }
.vscroll .btn:first-child { border-bottom: 1px solid #b8b8b8; }
.vscroll .btn:last-child { border-top: 1px solid #b8b8b8; }
.vscroll .g1 { height: 60px; }
.vscroll .thumb { height: 43px; background: #fcfcfc; border: solid #b8b8b8; border-width: 1px 0; }
.vscroll .g2 { flex: 1; }
.hscroll { height: 17px; flex: none; border-top: 1px solid #b8b8b8; background: #e3e3e3; display: flex; }
.hscroll .btn { width: 17px; border-right: 1px solid #b8b8b8; }
.hscroll .g1 { width: 47px; }
.hscroll .thumb { width: 172px; background: #fcfcfc; border: solid #b8b8b8; border-width: 0 1px; }
.hscroll .g2 { flex: 1; border-right: 1px solid #b8b8b8; }
.hscroll .corner { width: 16px; background: #efefef; }
.split { height: 7px; flex: none; background: repeating-linear-gradient(90deg, #c0c0c0 0 1px, transparent 1px 3px) 153px 4px / 18px 1px no-repeat; }
.layersDock { flex: 1; display: flex; flex-direction: column; min-height: 0; }
.layersDock .dockTitle { height: 21px; }
.layersDock .dockTools { height: 30px; padding-bottom: 5px; }
.layerList { flex: 1; border: 1px solid #b4b4b4; background: #fff; }
.layer { height: 22px; display: flex; align-items: center; padding-left: 28px; font-weight: bold; color: #0c0c0c; }
.check { width: 17px; height: 17px; flex: none; border: 1px solid #b2b2b2; background: #fff; display: flex; align-items: center; justify-content: center; }
.swatch { width: 19px; height: 19px; margin: 0 6px; border: 1px solid #565b66; }
.layer.sel .name { text-decoration: underline; text-decoration-thickness: 1px; text-underline-offset: 2px; }
.vsplit { width: 7px; flex: none; background: repeating-linear-gradient(#c0c0c0 0 1px, transparent 1px 3px) 4px 408px / 1px 17px no-repeat; }
.map { flex: 1; border: 1px solid #b4b4b4; margin-top: 1px; background: #fff; overflow: hidden; }
.feat * { stroke: #262a2c; stroke-width: 1.200px; vector-effect: non-scaling-stroke; stroke-linejoin: round; }
.feat > :not([fill]) { fill: #d1e2e2; }
footer { height: 32px; flex: none; display: flex; align-items: center; padding: 0 0 0 4px; font-family: "DejaVu Sans Condensed", "DejaVu Sans", sans-serif; font-stretch: condensed; font-size: 13px; letter-spacing: -.08px; }
footer > * { flex: none; }
.field { height: 24px; background: #fff; border: 1px solid #aaa; border-radius: 3px; display: flex; align-items: center; }
.locate { width: 232px; padding-left: 8px; color: #757575; }
.locate span { margin-left: 6px; }
.coord { margin-left: 778px; width: 65px; }
.f1 { width: 107px; padding-left: 6px; letter-spacing: -.3px; }
.s1 { margin: 0 13px 0 5px; }
.scale { width: 34px; }
.f2 { width: 93px; padding-left: 3px; justify-content: space-between; letter-spacing: -.3px; }
.f2 b { width: 25px; height: 20px; background: #f1f1f1; display: flex; align-items: center; justify-content: center; padding-right: 5px; }
.f2 b::before { content: ""; border: 5px solid transparent; border-top-color: #666; border-bottom: 0; }
.s2 { margin: 0 9px 0 12px; }
.mag { width: 56px; }
.f3 { width: 93px; padding-left: 4px; justify-content: space-between; }
.f4 { width: 89px; padding-left: 4px; justify-content: space-between; }
em { width: 18px; height: 22px; border-left: 1px solid #aaa; background: #f4f4f4; display: flex; align-items: center; justify-content: center; }
.rot { margin-left: 9px; width: 56px; }
footer .check { margin: 0 6px 0 6px; }
.rend { width: 58px; }
.s3 { margin-right: 4px; }
.epsg { width: 90px; letter-spacing: -.25px; }
</style>
